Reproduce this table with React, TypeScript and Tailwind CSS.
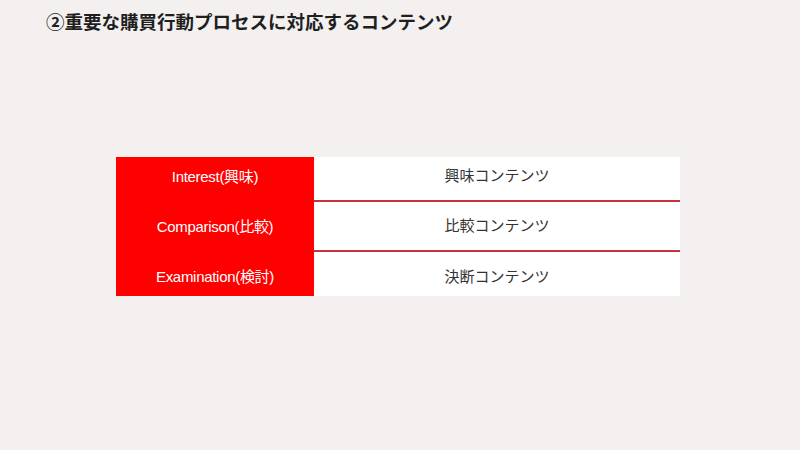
export default function App() {
  const rows = [
    { label: "Interest(興味)", h: "h-[45px]", pb: "pb-[5px]" },
    { label: "Comparison(比較)", h: "h-[50px]", pb: "pb-[0px]" },
    { label: "Examination(検討)", h: "h-[44px]", pb: "pt-[6px]" },
  ];

  return (
    <div
      className="w-[800px] h-[450px] bg-[#f3f0ef] flex flex-col"
      style={{ fontFamily: '"Liberation Sans", "Noto Sans CJK JP", sans-serif' }}
    >
      <h1 className="pl-[46px] pt-[11px] text-[18.5px] leading-[24px] font-bold text-[#1f1f1f]">
        ②重要な購買行動プロセスに対応するコンテンツ
      </h1>

      <div className="ml-[116px] mt-[122px] w-[564px] flex">
        <div className="w-[198px] bg-[#ff0000] flex flex-col">
          {rows.map((r) => (
            <div
              key={r.label}
              className={`${r.h} ${r.pb} flex items-center justify-center text-white text-[15px] tracking-[-0.3px]`}
            >
              {r.label}
            </div>
          ))}
        </div>
        <div className="flex-1 bg-white flex flex-col">
          <div className="h-[45px] pb-[5px] flex items-center justify-center border-b-2 border-[#c4343c] text-[15px] text-[#333333]">
            興味コンテンツ
          </div>
          <div className="h-[50px] flex items-center justify-center border-b-2 border-[#c4343c] text-[15px] text-[#333333]">
            比較コンテンツ
          </div>
          <div className="h-[44px] pt-[6px] flex items-center justify-center text-[15px] text-[#333333]">
            決断コンテンツ
          </div>
        </div>
      </div>
    </div>
  );
}
